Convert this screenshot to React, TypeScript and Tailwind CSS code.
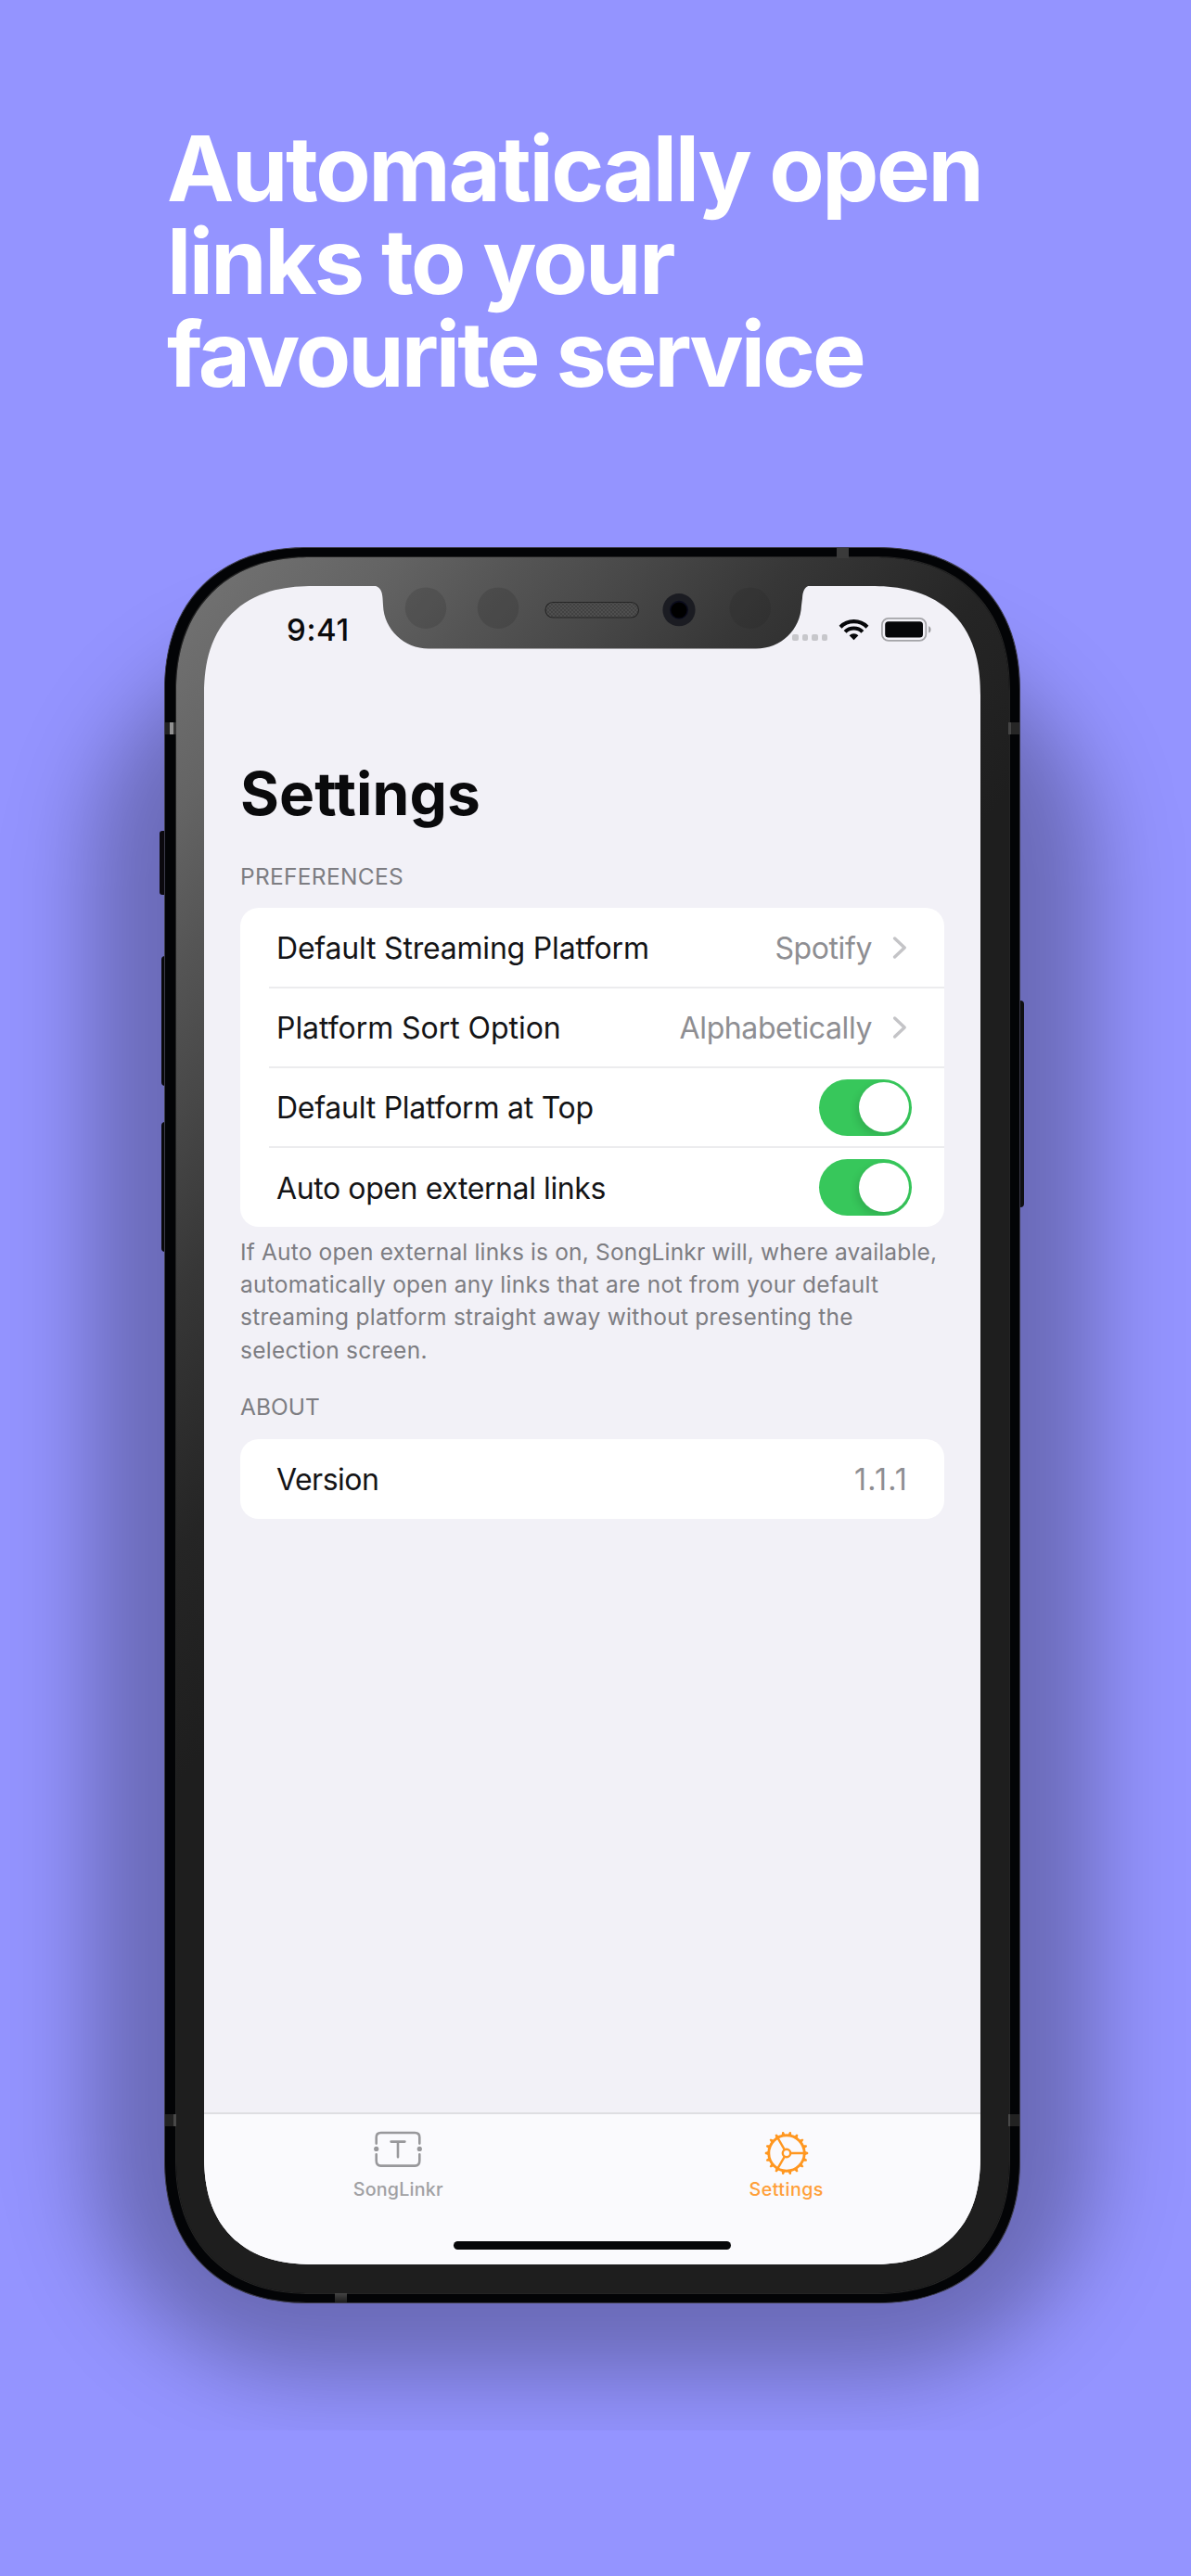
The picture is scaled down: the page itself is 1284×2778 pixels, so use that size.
import type { ReactNode } from "react";

function Notch() {
  return (
    <svg className="absolute left-[178px] top-[-1px]" width="480" height="70" viewBox="0 0 480 70" fill="none">
      <defs>
        <linearGradient id="glass" gradientUnits="userSpaceOnUse" x1="-208" y1="-30" x2="1241" y2="1187">
          <stop offset="0" stopColor="#757575" />
          <stop offset=".094" stopColor="#646464" />
          <stop offset=".15" stopColor="#555555" />
          <stop offset=".205" stopColor="#484848" />
          <stop offset=".27" stopColor="#373737" />
          <stop offset=".365" stopColor="#252525" />
          <stop offset=".45" stopColor="#1e1e1e" />
        </linearGradient>
        <pattern id="mesh" width="4" height="4" patternUnits="userSpaceOnUse">
          <rect width="4" height="4" fill="#4f4f4f" />
          <circle cx="1" cy="1" r=".9" fill="#3b3b3b" />
          <circle cx="3" cy="3" r=".9" fill="#3b3b3b" />
        </pattern>
      </defs>
      <path
        d="M0 0C10 0 14 4 14.5 14L15 22C16 48 38 68.5 64 68.5H417C444 68.5 465 48 466 22L467 14C467.5 4 471 0 479 0Z"
        fill="url(#glass)"
      />
      <circle cx="61" cy="24.7" r="22.3" fill="#000" opacity=".11" />
      <circle cx="139" cy="24.7" r="22.3" fill="#000" opacity=".11" />
      <circle cx="410.7" cy="24.7" r="22.3" fill="#000" opacity=".07" />
      <rect x="190" y="18.5" width="100.5" height="16.5" rx="8.2" fill="url(#mesh)" stroke="#262626" strokeWidth="1.2" />
      <circle cx="334" cy="26.7" r="17.6" fill="#1b1c22" />
      <circle cx="334" cy="26.7" r="10" fill="#0a0b1c" />
      <circle cx="334" cy="27" r="8.6" fill="#000" />
    </svg>
  );
}

function StatusBar() {
  return (
    <div className="flex h-[98px] items-start pl-[89px] pt-[34px]">
      <span className="mt-[-7px] w-[545px] text-[33px] font-medium leading-[40px] tracking-[0.6px]">9:41</span>
      <div className="mt-[18px] flex gap-[4px]">
        {[0, 1, 2, 3].map((i) => (
          <span key={i} className="h-[7px] w-[6.5px] rounded-[2px] bg-[#c7c7cb]" />
        ))}
      </div>
      <svg className="ml-[12px]" width="33" height="25" viewBox="0 0 33 25" fill="none" stroke="#060709" strokeWidth="4.1">
        <path d="M2 10.2A20.4 20.4 0 0 1 31 10.2" />
        <path d="M7.1 15.4A13.3 13.3 0 0 1 25.9 15.4" />
        <path d="M16.5 24.2L11.6 19.2A7 7 0 0 1 21.4 19.2Z" fill="#060709" stroke="none" />
      </svg>
      <svg className="ml-[13px]" width="55" height="26" viewBox="0 0 55 26" fill="none">
        <rect x=".9" y=".9" width="47.4" height="24" rx="7" stroke="#a4a4a8" strokeWidth="1.8" />
        <rect x="4.2" y="4.2" width="40.8" height="17.4" rx="3.5" fill="#060709" />
        <path d="M51.2 9.2C54.3 10.4 54.3 15.4 51.2 16.6Z" fill="#98989c" />
      </svg>
    </div>
  );
}

function Chevron() {
  return (
    <svg width="16" height="26" viewBox="0 0 16 26" fill="none" stroke="#c4c4c7" strokeWidth="3.4" strokeLinecap="round" strokeLinejoin="round">
      <path d="M2.6 3L13.2 13L2.6 23" />
    </svg>
  );
}

function Toggle() {
  return (
    <div className="mt-px flex h-[61px] w-[100px] items-center justify-end overflow-hidden rounded-full bg-[#37c75b] pr-[3.5px]">
      <div className="h-[53.5px] w-[53.5px] rounded-full bg-white shadow-[-3px_4px_9px_rgba(0,0,0,0.12)]" />
    </div>
  );
}

function Row({ label, tracking, divider, children }: { label: string; tracking: string; divider?: boolean; children: ReactNode }) {
  return (
    <div className="flex h-[86px] flex-col pl-[31px]">
      <div className="flex min-h-0 flex-1 items-center justify-between pl-[8px]">
        <span className={`pt-[3px] text-[32px] leading-[40px] text-[#141416] ${tracking}`}>{label}</span>
        {children}
      </div>
      {divider && <div className="-mb-px h-[2px] shrink-0 bg-[#ececee]" />}
    </div>
  );
}

function Link({ value, tracking }: { value: string; tracking: string }) {
  return (
    <div className="flex items-center gap-[22px] pr-[40px]">
      <span className={`pt-[3px] text-[32px] leading-[40px] text-[#8e8e92] ${tracking}`}>{value}</span>
      <Chevron />
    </div>
  );
}

function SongLinkrIcon() {
  return (
    <svg width="52" height="40" viewBox="0 0 52 40" fill="none" stroke="#98989b" strokeWidth="2.6" strokeLinecap="round">
      <path d="M2.7 13.6V7C2.7 3.8 4.4 2 7.6 2H44.4C47.6 2 49.3 3.8 49.3 7V13.6" />
      <path d="M2.7 25.4V32C2.7 35.8 4.4 37.6 7.6 37.6H44.4C47.6 37.6 49.3 35.8 49.3 32V25.4" />
      <path d="M18.6 11.6H33.4M26 11.6V28.2" />
      <circle cx="2.7" cy="19.4" r="2.6" fill="#98989b" stroke="none" />
      <circle cx="49.3" cy="19.4" r="2.6" fill="#98989b" stroke="none" />
    </svg>
  );
}

const TEETH = Array.from({ length: 18 }, (_, i) => i * 20);

function GearIcon() {
  return (
    <svg width="48" height="48" viewBox="-24 -24 48 48" fill="none" stroke="#ff9720">
      <circle r="19.2" strokeWidth="2.9" />
      {TEETH.map((a) => (
        <path key={a} d="M20 -1.9L23.2 -.9V.9L20 1.9Z" fill="#ff9720" stroke="none" transform={`rotate(${a})`} />
      ))}
      <circle r="4.2" strokeWidth="2.4" />
      {[0, 120, 240].map((a) => (
        <path key={a} d="M4.8 0H19" strokeWidth="2.4" transform={`rotate(${a})`} />
      ))}
    </svg>
  );
}

function Screen() {
  return (
    <div className="relative flex h-[1810px] w-[837px] flex-col overflow-hidden rounded-[118px] bg-[#f2f1f7] text-[#0a0a0c] [corner-shape:superellipse(1.25)]">
      <StatusBar />
      <Notch />
      <div className="flex flex-1 flex-col px-[39px] pt-[87px]">
        <h2 className="text-[64px] font-bold leading-[78px] tracking-[0.1px]">Settings</h2>
        <h3 className="mt-[35px] text-[24.5px] leading-[30px] tracking-[0.3px] text-[#7d7d82]">PREFERENCES</h3>
        <div className="mt-[19px] rounded-[20px] bg-white">
          <Row label="Default Streaming Platform" tracking="tracking-[-0.2px]" divider>
            <Link value="Spotify" tracking="tracking-[-0.4px]" />
          </Row>
          <Row label="Platform Sort Option" tracking="tracking-[-0.05px]" divider>
            <Link value="Alphabetically" tracking="tracking-[-0.4px]" />
          </Row>
          <Row label="Default Platform at Top" tracking="tracking-[-0.25px]" divider>
            <div className="pr-[35px]">
              <Toggle />
            </div>
          </Row>
          <Row label="Auto open external links" tracking="tracking-[-0.4px]">
            <div className="pr-[35px]">
              <Toggle />
            </div>
          </Row>
        </div>
        <p className="mt-[10px] whitespace-nowrap text-[24.5px] leading-[35.2px] tracking-[0.26px] text-[#7d7d82]">
          <span className="tracking-[0.16px]">If Auto open external links is on, SongLinkr will, where available,</span>
          <br />
          automatically open any links that are not from your default
          <br />
          streaming platform straight away without presenting the
          <br />
          selection screen.
        </p>
        <h3 className="mt-[28px] text-[24.5px] leading-[30px] text-[#7d7d82]">ABOUT</h3>
        <div className="mt-[20px] rounded-[20px] bg-white">
          <Row label="Version" tracking="tracking-[-0.5px]">
            <span className="pr-[39px] pt-[3px] text-[32px] leading-[40px] tracking-[1.2px] text-[#8e8e92]">1.1.1</span>
          </Row>
        </div>
      </div>
      <nav className="flex h-[164px] flex-col items-center border-t-2 border-[#dedee2] bg-[#fafafd]">
        <div className="flex w-full flex-1 text-[19.7px] font-medium leading-[24px]">
          <div className="flex flex-1 flex-col items-center pt-[18px] text-[#a0a0a3]">
            <SongLinkrIcon />
            <span className="mt-[11px] tracking-[0.2px]">SongLinkr</span>
          </div>
          <div className="flex flex-1 flex-col items-center pt-[18px] text-[#ff9f38]">
            <GearIcon />
            <span className="mt-[3px] tracking-[0.45px]">Settings</span>
          </div>
        </div>
        <div className="mb-[16px] h-[9.5px] w-[299px] rounded-full bg-[#060709]" />
      </nav>
    </div>
  );
}

function Phone() {
  return (
    <div className="relative h-[1894px] w-[923px]">
      {/* ambient shadow */}
      <div className="absolute bottom-[-78px] left-[-80px] right-[-80px] top-[105px] rounded-[240px] bg-black/[0.28] blur-[46px]" />

      {/* side buttons */}
      <div className="absolute left-[-5px] top-[306px] h-[69px] w-[8px] rounded-[3px] bg-[#0b090e]" />
      <div className="absolute left-[-3.5px] top-[441px] h-[140px] w-[8px] rounded-[4px] bg-[#08080a]" />
      <div className="absolute left-[-3.5px] top-[620px] h-[140px] w-[8px] rounded-[4px] bg-[#08080a]" />
      <div className="absolute right-[-3.5px] top-[489px] h-[223px] w-[8px] rounded-[4px] bg-[#101012]" />

      {/* steel band and front glass */}
      <div className="relative flex h-full w-full overflow-hidden rounded-[155px] border border-[#3c3b4a] bg-[#030406] pb-[10px] pl-[12px] pr-[11px] pt-[10px] [corner-shape:superellipse(1.17)]">
        <div className="absolute left-0 top-[188px] h-[13px] w-[12px] bg-[linear-gradient(90deg,#222_0_5px,#909090_5px_9px,#333_9px)]" />
        <div className="absolute right-0 top-[188px] h-[13px] w-[12px] bg-[linear-gradient(90deg,#444_0_3px,#262626_3px)]" />
        <div className="absolute left-[724px] top-0 h-[11px] w-[13px] bg-[#3a3a3a]" />
        <div className="absolute bottom-0 left-[183px] h-[10px] w-[13px] bg-[linear-gradient(180deg,#444,#1c1c1c)]" />
        <div className="absolute left-0 top-[1689px] h-[13px] w-[12px] bg-[linear-gradient(90deg,#222_0_9px,#484848_9px)]" />
        <div className="absolute right-0 top-[1689px] h-[13px] w-[12px] bg-[linear-gradient(90deg,#484848_0_2px,#222_2px)]" />
        <div className="flex flex-1 rounded-[145px] bg-[linear-gradient(130deg,#757575_0%,#646464_9.4%,#555555_15%,#484848_20.5%,#373737_27%,#252525_36.5%,#1e1e1e_45%)] pl-[30px] pt-[31px] shadow-[0_0_0_1px_#242424] [corner-shape:superellipse(1.17)]">
          <Screen />
        </div>
      </div>
    </div>
  );
}

export default function App() {
  return (
    <main className="h-[2778px] w-[1284px] overflow-hidden bg-[#9494ff] font-['Inter',sans-serif]">
      <div className="flex h-[2621px] flex-col overflow-hidden">
        <h1 className="flex h-[590px] shrink-0 flex-col whitespace-nowrap pl-[180px] pt-[132px] text-[97px] font-[650] leading-[100px] text-white">
          <span className="tracking-[-2.4px]">Automatically open </span>
          <span className="tracking-[-2.6px]">links to your </span>
          <span className="tracking-[-3px]">favourite service</span>
        </h1>
        <div className="pl-[177px]">
          <Phone />
        </div>
      </div>
    </main>
  );
}
